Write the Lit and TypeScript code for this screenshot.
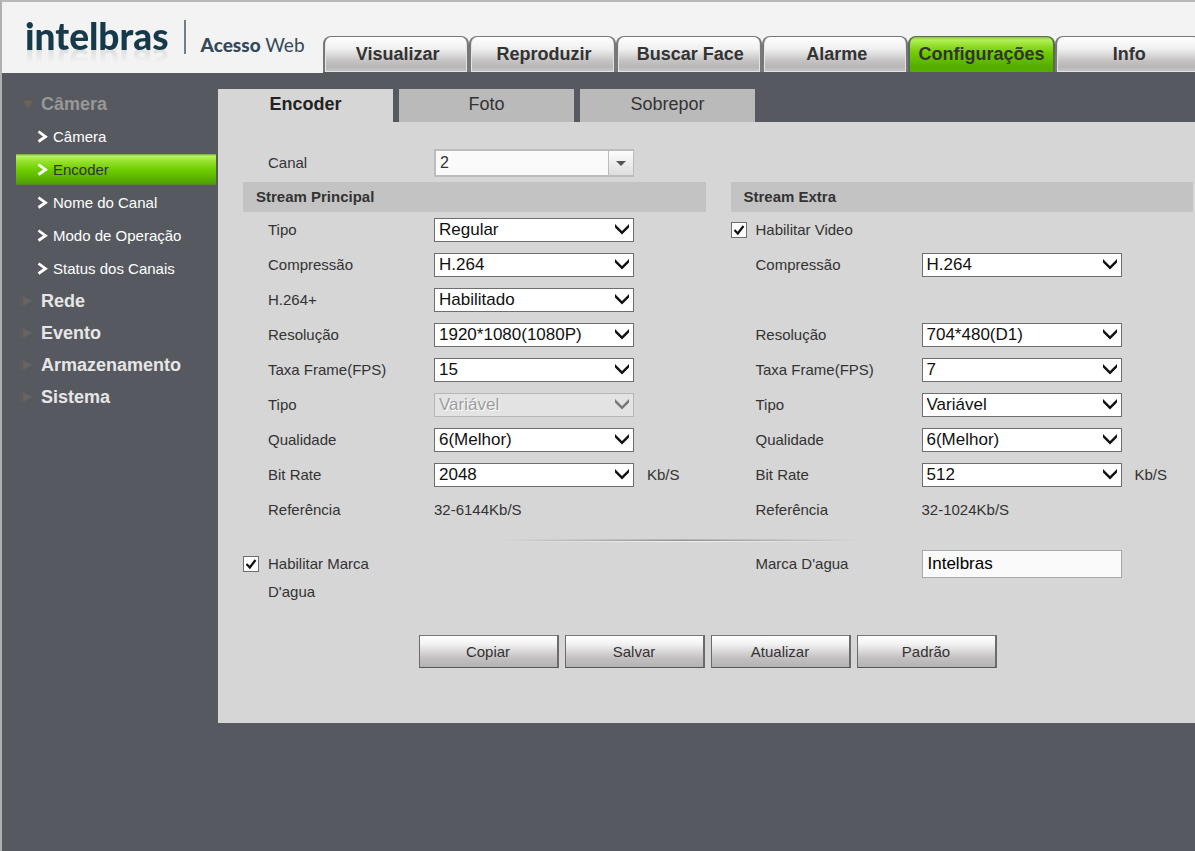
import { LitElement, html, css, nothing } from "lit";
import { customElement, property, state } from "lit/decorators.js";
import { classMap } from "lit/directives/class-map.js";

interface Field {
  id: string;
  label: string;
  options?: string[];
  text?: string;
  unit?: string;
  disabled?: boolean;
  check?: boolean;
}

const MAIN_TABS = ["Visualizar", "Reproduzir", "Buscar Face", "Alarme", "Configurações", "Info"];
const PAGE_TABS = ["Encoder", "Foto", "Sobrepor"];
const CAMERA_ITEMS = ["Câmera", "Encoder", "Nome do Canal", "Modo de Operação", "Status dos Canais"];
const CLOSED_GROUPS = ["Rede", "Evento", "Armazenamento", "Sistema"];
const ACTIONS = ["Copiar", "Salvar", "Atualizar", "Padrão"];

const MAIN_STREAM: (Field | null)[] = [
  { id: "m-type", label: "Tipo", options: ["Regular"] },
  { id: "m-comp", label: "Compressão", options: ["H.264"] },
  { id: "m-plus", label: "H.264+", options: ["Habilitado"] },
  { id: "m-res", label: "Resolução", options: ["1920*1080(1080P)"] },
  { id: "m-fps", label: "Taxa Frame(FPS)", options: ["15"] },
  { id: "m-rate", label: "Tipo", options: ["Variável"], disabled: true },
  { id: "m-quality", label: "Qualidade", options: ["6(Melhor)"] },
  { id: "m-bit", label: "Bit Rate", options: ["2048"], unit: "Kb/S" },
  { id: "m-ref", label: "Referência", text: "32-6144Kb/S" },
];

const EXTRA_STREAM: (Field | null)[] = [
  { id: "e-enable", label: "Habilitar Video", check: true },
  { id: "e-comp", label: "Compressão", options: ["H.264"] },
  null,
  { id: "e-res", label: "Resolução", options: ["704*480(D1)"] },
  { id: "e-fps", label: "Taxa Frame(FPS)", options: ["7"] },
  { id: "e-rate", label: "Tipo", options: ["Variável"] },
  { id: "e-quality", label: "Qualidade", options: ["6(Melhor)"] },
  { id: "e-bit", label: "Bit Rate", options: ["512"], unit: "Kb/S" },
  { id: "e-ref", label: "Referência", text: "32-1024Kb/S" },
];

@customElement("site-header")
class SiteHeader extends LitElement {
  @property() active = "";

  static styles = css`
    :host {
      display: flex;
      height: 71px;
      background: #f3f3f3;
      overflow: hidden;
    }
    .brand {
      flex: 0 0 321px;
      box-sizing: border-box;
      padding: 16px 0 0 23px;
      display: flex;
      align-items: flex-start;
      font-family: Lato, sans-serif;
      color: #173a4b;
    }
    .name {
      font-size: 37px;
      line-height: 36px;
      font-weight: 900;
      -webkit-box-reflect: below -9px linear-gradient(transparent 50%, rgba(0, 0, 0, 0.14));
    }
    .bar {
      width: 2px;
      height: 34px;
      margin: 2px 15px 0;
      background: #6f7f88;
    }
    .product {
      padding-top: 15px;
      font-size: 19px;
      line-height: 24px;
      color: #33495a;
    }
    .product b {
      font-weight: 900;
    }
    nav {
      flex: 1;
      margin: 34px -6px 0 0;
      display: grid;
      grid-template-columns: repeat(6, 1fr);
    }
    a {
      box-sizing: border-box;
      height: 36px;
      padding-left: 3px;
      border: solid #75777a;
      border-width: 1px 2px 0;
      border-radius: 8px 8px 0 0;
      background: linear-gradient(#ffffff, #f0efef 35%, #c4c2c2 68%, #b9b6b7 85%, #c8c6c7);
      box-shadow: inset 1px 0 #e6e6e6, inset -1px -1px #e3e3e3, 0 1px #565a60;
      font: bold 18px/35px "Liberation Sans", sans-serif;
      text-align: center;
      text-decoration: none;
      color: #333;
      white-space: nowrap;
    }
    a.active {
      padding-left: 0;
      background: linear-gradient(#8fc04e, #b2f255 3px, #93dd2c 25%, #70cc00 45%, #54ad00 85%, #54ad00);
      border-color: #5b6b50;
      box-shadow: 0 1px #565a60;
    }
  `;

  render() {
    return html`
      <div class="brand">
        <div class="name">intelbras</div>
        <div class="bar"></div>
        <div class="product"><b>Acesso</b> Web</div>
      </div>
      <nav>
        ${MAIN_TABS.map(
          (t) => html`<a href="#" class=${classMap({ active: t === this.active })}>${t}</a>`
        )}
      </nav>
    `;
  }
}

@customElement("side-menu")
class SideMenu extends LitElement {
  @property() active = "";

  static styles = css`
    :host {
      display: flex;
      flex-direction: column;
      padding: 15px 2px 0 14px;
      font-family: "Liberation Sans", sans-serif;
    }
    a {
      display: flex;
      align-items: center;
      text-decoration: none;
      white-space: nowrap;
    }
    .group {
      height: 32px;
      padding-left: 4px;
      gap: 6px;
      font-size: 18px;
      font-weight: bold;
      color: #e6e6e6;
    }
    .group.open {
      color: #989898;
    }
    .item {
      height: 31px;
      margin: 1px 0;
      padding-left: 21px;
      gap: 5px;
      font-size: 15px;
      color: #fff;
    }
    .item.active {
      color: #333;
      background: linear-gradient(#6d9f38 0, #b6f75c 2px, #94e02b 25%, #70cd00 50%, #4da400 94%, #5a7f38);
    }
  `;

  render() {
    return html`
      <a href="#" class="group open">
        <svg width="15" height="14" viewBox="0 0 15 14">
          <path d="M1.500 2H14.500L8 11.500Z" fill="#6b6259" />
          <path d="M1.500 2H14.500L13.500 3.500H2.500Z" fill="#5d5855" />
        </svg>
        Câmera
      </a>
      ${CAMERA_ITEMS.map(
        (t) => html`
          <a href="#" class="item ${classMap({ active: t === this.active })}">
            <svg width="11" height="13" viewBox="0 0 11 13">
              <path d="M1.500 1.500L8.500 6.700L1.500 11.500" fill="none" stroke="#fff" stroke-width="2.800" />
            </svg>
            ${t}
          </a>
        `
      )}
      ${CLOSED_GROUPS.map(
        (t) => html`
          <a href="#" class="group">
            <svg width="15" height="14" viewBox="0 0 15 14">
              <path d="M0.500 0.500L12 7L0.500 13.500Z" fill="#676360" />
              <path d="M0.500 0.500L3 2V12L0.500 13.500Z" fill="#5c5a5b" />
            </svg>
            ${t}
          </a>
        `
      )}
    `;
  }
}

@customElement("encoder-form")
class EncoderForm extends LitElement {
  static styles = css`
    :host {
      display: block;
      padding: 27px 2px 55px 25px;
      background: #d6d6d6;
      font: 15px/28px "Liberation Sans", sans-serif;
      color: #333;
    }
    .columns {
      display: grid;
      grid-template-columns: 1fr 1fr;
      column-gap: 25px;
    }
    .row {
      display: grid;
      grid-template-columns: 25px 166px 1fr;
      align-items: center;
      box-sizing: border-box;
      height: 35px;
      padding-top: 1px;
    }
    .row.tall {
      height: auto;
      padding: 0;
      align-items: start;
    }
    .row.channel {
      height: 28px;
      padding: 0;
    }
    label,
    .label {
      grid-column: 2;
      max-width: 140px;
    }
    .control {
      display: flex;
      align-items: center;
      gap: 13px;
    }
    h2 {
      margin: 5px 0 0;
      padding-left: 13px;
      font-size: 15px;
      line-height: 30px;
      background: #c3c3c3;
    }
    .pick {
      display: grid;
      width: 200px;
    }
    .pick > * {
      grid-area: 1 / 1;
    }
    .pick svg {
      justify-self: end;
      align-self: center;
      margin-right: 5px;
      pointer-events: none;
    }
    select {
      appearance: none;
      box-sizing: border-box;
      width: 200px;
      height: 24px;
      margin: 0;
      padding: 0 24px 0 4px;
      border: 1px solid #6e6e6e;
      border-radius: 0;
      background: #fff;
      font: 17px/22px "Liberation Sans", sans-serif;
      color: #111;
    }
    select:disabled {
      opacity: 1;
      border-color: #b6b6b6;
      background: #e3e3e3;
      color: #9c9c9c;
      text-shadow: 1px 1px #fff;
    }
    .channel select {
      height: 28px;
      border: 2px solid #bcbcbc;
      background: #fafafa;
      color: #333;
      font-size: 16px;
      line-height: 24px;
    }
    .channel .arrow {
      justify-self: end;
      align-self: center;
      box-sizing: border-box;
      display: grid;
      place-items: center;
      width: 25px;
      height: 24px;
      margin-right: 1px;
      border-left: 1px solid #bcbcbc;
      background: linear-gradient(#fcfcfc, #dedede);
      pointer-events: none;
    }
    .channel .arrow svg {
      margin: 0;
      justify-self: center;
    }
    .tick {
      grid-column: 1;
      display: grid;
      width: 16px;
      height: 16px;
    }
    .tall .tick {
      margin-top: 6px;
    }
    .tick > * {
      grid-area: 1 / 1;
    }
    .tick svg {
      pointer-events: none;
      visibility: hidden;
    }
    .tick input:checked + svg {
      visibility: visible;
    }
    .tick input {
      appearance: none;
      box-sizing: border-box;
      width: 16px;
      height: 16px;
      margin: 0;
      border: 1px solid #6e6e6e;
      background: #fff;
    }
    .mark {
      box-sizing: border-box;
      width: 200px;
      height: 28px;
      padding: 0 5px;
      border: 1px solid #a9a9a9;
      background: #fafafa;
      font: 17px/26px "Liberation Sans", sans-serif;
      color: #000;
    }
    .divider {
      height: 3px;
      padding-right: 75px;
      margin: 12px 0 8px;
      display: flex;
      justify-content: center;
    }
    .line {
      width: 360px;
      background: linear-gradient(90deg, #d6d6d6, rgba(214, 214, 214, 0) 50%, #d6d6d6),
        linear-gradient(#b4b4b4 0 1px, #909090 1px 2px, #f0f0f0 2px 3px);
    }
    .actions {
      display: flex;
      justify-content: center;
      gap: 6px;
      margin: 29px 0 0 -21px;
    }
    .actions button {
      width: 140px;
      height: 33px;
      padding: 0;
      border: 2px solid;
      border-color: #777 #6b6b6b #555 #6b6b6b;
      border-width: 1px 2px 1px 1px;
      border-radius: 0;
      background: linear-gradient(#fff, #f4f3f3 25%, #c4c1c2 70%, #b5b2b3);
      font: 15px/30px "Liberation Sans", sans-serif;
      color: #333;
    }
  `;

  private tick(id: string) {
    return html`<span class="tick">
      <input type="checkbox" id=${id} checked />
      <svg width="16" height="16" viewBox="0 0 16 16">
        <path d="M3.500 8L6.800 11.500L12.500 4" fill="none" stroke="#111" stroke-width="2.200" />
      </svg>
    </span>`;
  }

  private select(f: Field) {
    return html`<span class="pick">
      <select id=${f.id} ?disabled=${f.disabled}>
        ${f.options!.map((o) => html`<option>${o}</option>`)}
      </select>
      <svg width="14" height="12" viewBox="0 0 14 12">
        <path d="M0 0V3.500L7 10.500L14 3.500V0L7 7Z" fill=${f.disabled ? "#777" : "#111"} />
      </svg>
    </span>`;
  }

  private row(f: Field | null) {
    if (!f) return html`<div class="row"></div>`;
    return html`<div class="row">
      ${f.check ? this.tick(f.id) : nothing}
      ${f.text
        ? html`<span class="label">${f.label}</span>`
        : html`<label for=${f.id}>${f.label}</label>`}
      <div class="control">
        ${f.options ? this.select(f) : f.text ?? nothing}
        ${f.unit ? html`<span>${f.unit}</span>` : nothing}
      </div>
    </div>`;
  }

  render() {
    return html`
      <div class="row channel">
        <label for="channel">Canal</label>
        <span class="pick">
          <select id="channel">
            <option>2</option>
          </select>
          <span class="arrow">
            <svg width="10" height="5" viewBox="0 0 10 5"><path d="M0 0H10L5 5Z" fill="#555" /></svg>
          </span>
        </span>
      </div>
      <div class="columns">
        <section>
          <h2>Stream Principal</h2>
          ${MAIN_STREAM.map((f) => this.row(f))}
        </section>
        <section>
          <h2>Stream Extra</h2>
          ${EXTRA_STREAM.map((f) => this.row(f))}
        </section>
      </div>
      <div class="divider"><div class="line"></div></div>
      <div class="columns">
        <div class="row tall">
          ${this.tick("mark-on")}
          <label for="mark-on">Habilitar Marca D'agua</label>
        </div>
        <div class="row tall">
          <label for="mark">Marca D'agua</label>
          <input class="mark" id="mark" type="text" value="Intelbras" />
        </div>
      </div>
      <div class="actions">${ACTIONS.map((a) => html`<button type="button">${a}</button>`)}</div>
    `;
  }
}

@customElement("app-root")
class AppRoot extends LitElement {
  @state() private page = "Encoder";

  static styles = css`
    :host {
      display: flex;
      flex-direction: column;
      box-sizing: border-box;
      min-height: 100vh;
      border-left: 2px solid #b0b0b0;
      border-top: 2px solid #b8b8b8;
      background: #565a60;
      overflow: hidden;
    }
    .body {
      display: grid;
      grid-template-columns: 216px 1fr;
    }
    main {
      padding-top: 16px;
    }
    .tabs {
      display: flex;
      gap: 6px;
    }
    .tabs button {
      width: 175px;
      height: 33px;
      padding: 0 0 3px;
      border: 0;
      background: #bababa;
      font: 18px/30px "Liberation Sans", sans-serif;
      color: #333;
    }
    .tabs button.active {
      background: #d6d6d6;
      font-weight: bold;
      color: #222;
    }
  `;

  render() {
    return html`
      <site-header active="Configurações"></site-header>
      <div class="body">
        <side-menu active=${this.page}></side-menu>
        <main>
          <div class="tabs">
            ${PAGE_TABS.map(
              (t) => html`<button type="button" class=${classMap({ active: t === this.page })}>${t}</button>`
            )}
          </div>
          <encoder-form></encoder-form>
        </main>
      </div>
    `;
  }
}
